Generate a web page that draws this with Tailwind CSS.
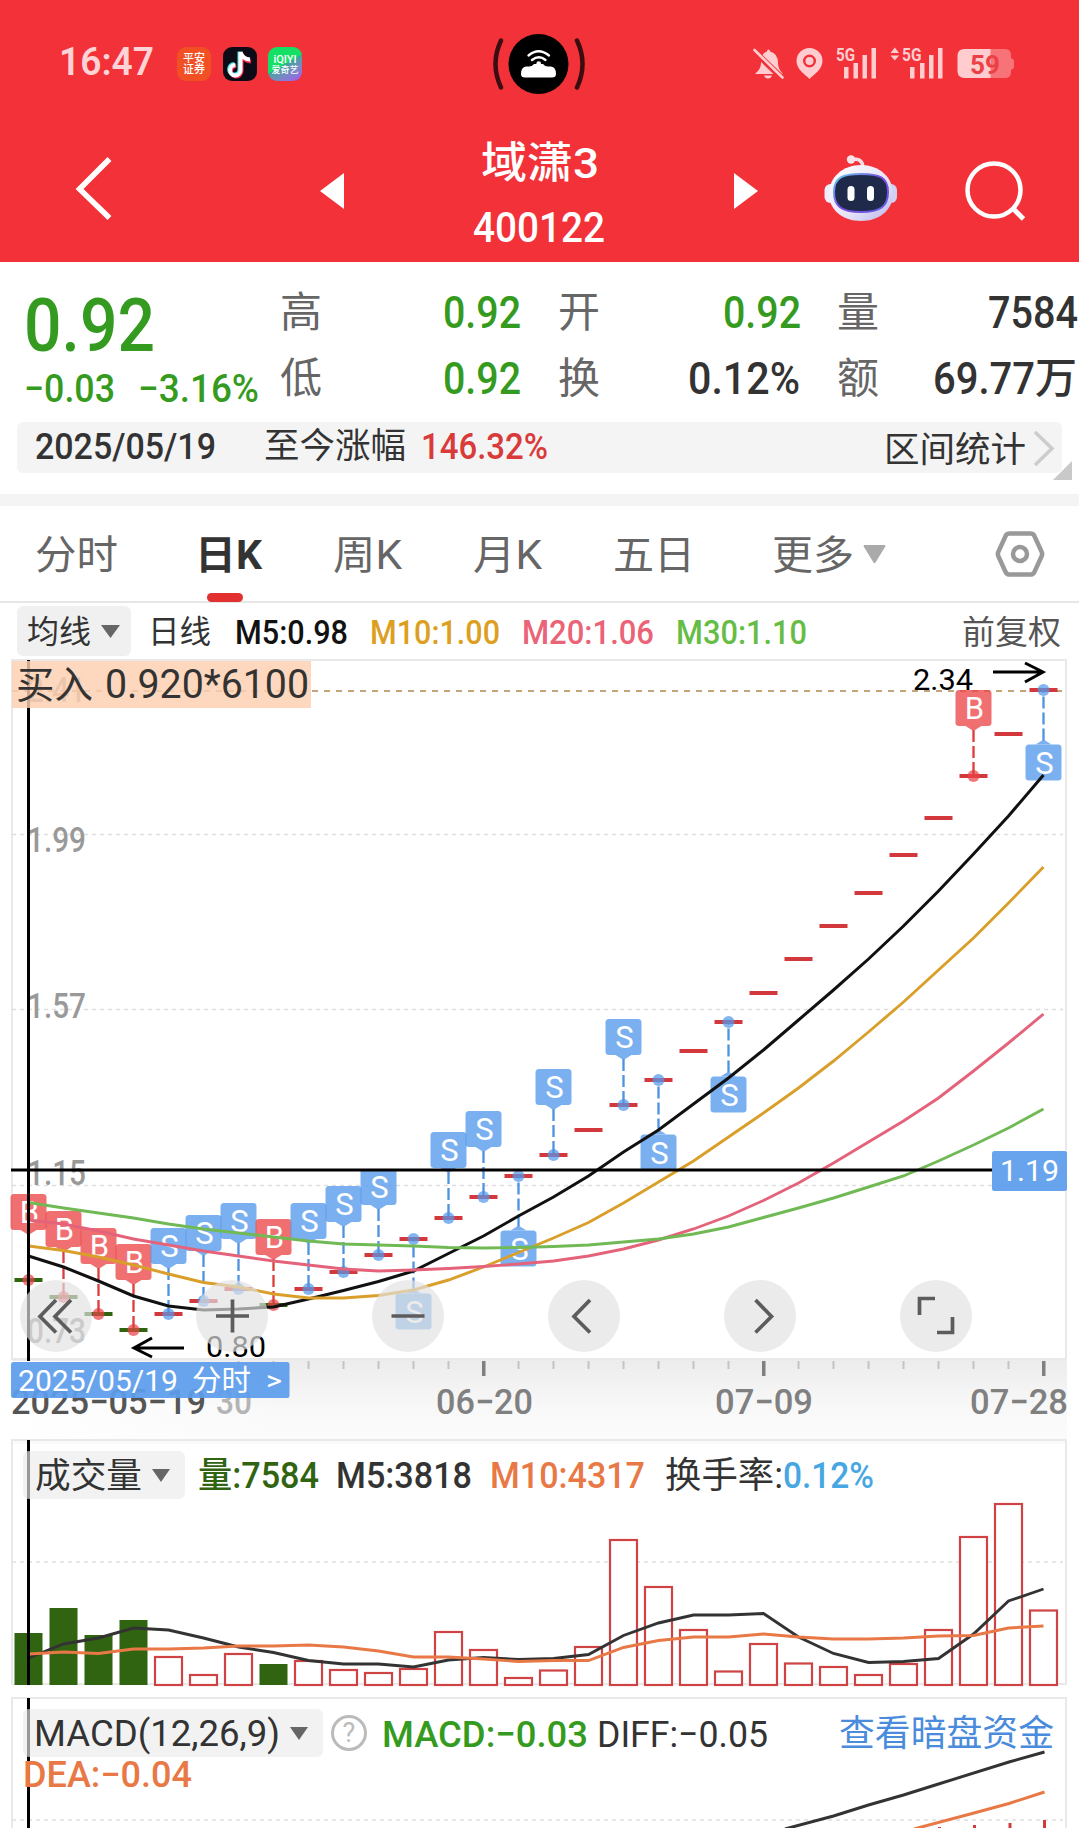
<!DOCTYPE html>
<html lang="zh-CN">
<head>
<meta charset="utf-8">
<title>域潇3 400122</title>
<script src="https://cdn.jsdelivr.net/npm/@tailwindcss/browser@4"></script>
</head>
<body class="bg-white">
<div class="w-[1079px] h-[1828px] overflow-hidden flex flex-col bg-white text-[#333] whitespace-nowrap font-['Roboto','Noto_Sans_CJK_SC',sans-serif]">

  <!-- Header -->
  <header class="h-[262px] shrink-0 bg-[#f23138] text-white">
    <div class="h-[128px] flex items-center">
      <span data-fit class="ml-[59px] w-[95px] text-[39px] leading-[40px] font-semibold text-[#ffd3d5] -mt-1">16:47</span>
      <div class="ml-[23px] size-[34px] rounded-[9px] bg-[#f15025] flex flex-col items-center justify-center text-[11px] leading-[11px] font-medium"><span>平安</span><span>证券</span></div>
      <svg class="ml-3 size-[34px]" viewBox="0 0 34 34"><rect width="34" height="34" rx="9" fill="#0c0b16"/><g fill="none" stroke-width="4"><path d="M17.500 5.500v18a5.200 5.200 0 1 1-5.200-5.500" stroke="#3be4e6" transform="translate(-1 -1)"/><path d="M17.500 5.500v18a5.200 5.200 0 1 1-5.200-5.500M17.500 6q2 7 9.500 7.500" stroke="#f5304f" transform="translate(1 1)"/><path d="M17.500 5v18.500a5.200 5.200 0 1 1-5.200-5.500M17.500 5q2 7 9.500 7.500" stroke="#fff"/></g></svg>
      <div class="ml-[11px] size-[34px] rounded-[9px] bg-linear-150 from-[#14e065] from-50% via-[#35a69a] to-[#a44cf5] flex flex-col items-center justify-center font-medium"><span class="text-[11px] leading-[11px]">iQIYI</span><span class="text-[9px] leading-[10px]">爱奇艺</span></div>
      <svg class="ml-[188px] w-[98px] h-[62px]" viewBox="490 33 98 62"><circle cx="538.500" cy="64" r="30"/><path d="M501 40.500q-11 23.500 0 47M577 40.500q11 23.500 0 47" fill="none" stroke="#3c0d10" stroke-width="4.500" stroke-linecap="round"/><path d="M521 74q0-7 5-7.500h3q3 0 5-2.500h9q2 2.500 5 2.500h3q5 .5 5 7.500 0 3.500-4 3.500h-27q-4 0-4-3.500z" fill="#fff"/><g fill="none" stroke="#fff" stroke-width="2.300" stroke-linecap="round"><path d="M528.500 55.500q10-8.500 20.500 0M532 60q7-5.500 13.500 0"/></g><circle cx="538.700" cy="63.500" r="2.300" fill="#fff"/></svg>
      <svg class="ml-[162px] w-[266px] h-[40px]" viewBox="750 44 266 40" fill="#ffcdd0">
        <path d="M755 74q6-5 6-11 0-10 6-11.500 0-2 1.500-2t1.500 2q8 2 8 11.500 0 6 5 11zM764 75.500h8q-1 3-4 3t-4-3z"/>
        <path d="M754 51l28 27" stroke="#f23138" stroke-width="6"/><path d="M754.500 50l28 27.500" stroke="#ffcdd0" stroke-width="2.600" stroke-linecap="round"/>
        <path fill-rule="evenodd" d="M809.500 48a13 13 0 0 1 13 13c0 8-8 13-13 18-5-5-13-10-13-18a13 13 0 0 1 13-13zm0 6.500a6.500 6.500 0 1 0 0 13 6.500 6.500 0 0 0 0-13z"/><circle cx="809.500" cy="61" r="4"/>
        <text x="836" y="61" font-size="18" font-weight="700" textLength="19" lengthAdjust="spacingAndGlyphs">5G</text>
        <text x="902" y="61" font-size="18" font-weight="700" textLength="19.500" lengthAdjust="spacingAndGlyphs">5G</text>
        <path d="M844 67h4.500v11.500h-4.500zM853.500 63h4.500v15.500h-4.500zM862.500 55h4.500v23.500h-4.500zM871.500 48h4.500v30.500h-4.500zM910 67h4.500v11.500h-4.500zM920 63h4.500v15.500h-4.500zM929 55h4.500v23.500h-4.500zM938 48h4.500v30.500h-4.500zM890.500 53l4.300-5.500 4.300 5.500zM890.500 55.500h8.600l-4.300 5z"/>
        <path d="M990 49h15q6 0 6 6v3l3 2v8l-3 2v2q0 6-6 6h-15z" fill="#f87377"/><path d="M990.500 49h-26q-7 0-7 7v15q0 7 7 7h26z"/>
        <text x="970" y="73.500" font-size="26" font-weight="700" fill="#ea4046" textLength="30" lengthAdjust="spacingAndGlyphs">59</text>
      </svg>
    </div>
    <div class="h-[122px] flex items-center">
      <svg class="ml-[74px] w-[40px] h-[68px]" viewBox="74 155 40 68"><path d="M109.500 159l-30 30 30 29" fill="none" stroke="#fff" stroke-width="5.500"/></svg>
      <svg class="ml-[206px] mt-1 w-[24px] h-[36px]" viewBox="0 0 24 36"><path d="M24 0v36L0 18z" fill="#fff"/></svg>
      <div class="ml-[129px] w-[132px] h-full pt-[11px] flex flex-col">
        <span data-fit class="ml-[8px] w-[118px] text-[43px] leading-[48px] font-medium">域潇3</span>
        <span data-fit class="mt-[17px] w-[132px] text-[42px] leading-[48px] font-medium">400122</span>
      </div>
      <svg class="ml-[129px] mt-1 w-[24px] h-[36px]" viewBox="0 0 24 36"><path d="M0 0v36l24-18z" fill="#fff"/></svg>
      <svg class="ml-[65px] w-[76px] h-[72px]" viewBox="823 153 76 72">
        <defs><linearGradient id="shell" x1="0" y1="0" x2="1" y2="1"><stop offset="0" stop-color="#fff"/><stop offset=".6" stop-color="#e6e3f8"/><stop offset="1" stop-color="#b9b3ea"/></linearGradient><linearGradient id="rim" x1="0" y1="0" x2="1" y2="1"><stop offset="0" stop-color="#67d3ee"/><stop offset=".5" stop-color="#7a48dc"/><stop offset="1" stop-color="#5e62e0"/></linearGradient></defs>
        <path d="M851 160q11-3 12 7" fill="none" stroke="#f7dfe8" stroke-width="3.500"/><circle cx="851" cy="159.500" r="4.200" fill="#fbe3ea"/>
        <rect x="824.500" y="184" width="14" height="19" rx="6" fill="#efedfb"/><rect x="883" y="184" width="14" height="19" rx="6" fill="#d3cff3"/>
        <path d="M861 165c18 0 32 12 32 29 0 16-14 27-32 27s-32-11-32-27c0-17 14-29 32-29z" fill="url(#shell)"/>
        <path d="M861 174c18 0 27 3 27 18 0 14-7 20-27 20s-27-6-27-20c0-15 9-18 27-18z" fill="#1f2a4b" stroke="url(#rim)" stroke-width="2"/>
        <rect x="847.500" y="186" width="7" height="15" rx="3.500" fill="#fff"/><rect x="867" y="186" width="7" height="15" rx="3.500" fill="#fff"/>
      </svg>
      <svg class="ml-[64px] w-[66px] h-[66px]" viewBox="963 156 66 66" fill="none" stroke="#fff"><circle cx="994" cy="190" r="26.500" stroke-width="4.500"/><path d="M1013 208.500l10.500 10.500" stroke-width="5"/></svg>
    </div>
  </header>

  <!-- Quote -->
  <section class="h-[160px] shrink-0 flex">
    <div class="w-[280px] pl-[24px] pt-[28px] text-[#349b20] font-medium">
      <span data-fit class="block w-[131px] text-[75px] leading-[70px]">0.92</span>
      <div class="mt-[9px] flex text-[39px] leading-[40px]">
        <span data-fit class="w-[91px]">−0.03</span><span data-fit class="ml-[23px] w-[121px]">−3.16%</span>
      </div>
    </div>
    <div class="pt-[18px] text-[45px] leading-[66px] font-medium">
      <div class="flex h-[66px]">
        <span class="w-[42px] text-[42px] font-normal text-[#666]">高</span><span data-fit class="ml-[121px] w-[78px] text-[#349b20]">0.92</span>
        <span class="ml-[37px] w-[42px] text-[42px] font-normal text-[#666]">开</span><span data-fit class="ml-[123px] w-[78px] text-[#349b20]">0.92</span>
        <span class="ml-[36px] w-[42px] text-[42px] font-normal text-[#666]">量</span><span data-fit class="ml-[109px] w-[90px]">7584</span>
      </div>
      <div class="flex h-[66px]">
        <span class="w-[42px] text-[42px] font-normal text-[#666]">低</span><span data-fit class="ml-[121px] w-[78px] text-[#349b20]">0.92</span>
        <span class="ml-[37px] w-[42px] text-[42px] font-normal text-[#666]">换</span><span data-fit class="ml-[88px] w-[112px]">0.12%</span>
        <span class="ml-[37px] w-[42px] text-[42px] font-normal text-[#666]">额</span><span data-fit class="ml-[54px] w-[102px]">69.77</span><span class="text-[42px]">万</span>
      </div>
    </div>
  </section>

  <!-- Range strip -->
  <section class="h-[72px] shrink-0 flex items-start relative">
    <div class="ml-[17px] w-[1045px] h-[51px] rounded-[6px] bg-[#f4f4f4] flex items-center text-[36px] leading-[50px]">
      <span data-fit class="ml-[18px] w-[181px] font-medium -mt-0.5">2025/05/19</span>
      <span data-fit class="ml-[48px] w-[142px] text-[35px] -mt-0.5">至今涨幅</span>
      <span data-fit class="ml-[15px] w-[127px] font-medium text-[#d93a3a] -mt-0.5">146.32%</span>
      <span data-fit class="ml-[336px] w-[142px] text-[35px] mt-1.5">区间统计</span>
      <svg class="ml-[7px] w-[24px] h-[40px]" viewBox="0 0 24 40"><path d="M2 4l17 16.500L2 37" fill="none" stroke="#ccc" stroke-width="3.500"/></svg>
    </div>
    <svg class="absolute left-[1053px] top-[39px] w-[19px] h-[19px]" viewBox="0 0 19 19"><path d="M19 0v19H0z" fill="#c9c9c9"/></svg>
  </section>
  <div class="h-[12px] shrink-0 bg-[#f4f4f4]"></div>

  <!-- Period tabs -->
  <nav class="h-[97px] shrink-0 border-b-2 border-[#e6e6e6] flex text-[40px] leading-[100px] text-[#666]">
    <span data-fit class="ml-[35px] w-[83px]">分时</span>
    <div class="ml-[77px] w-[67px] relative"><span data-fit class="block w-[67px] font-bold text-[#333]">日K</span><i class="absolute left-[12px] bottom-[-1px] w-[36px] h-[9px] rounded-full bg-[#e23030]"></i></div>
    <span data-fit class="ml-[71px] w-[69px]">周K</span>
    <span data-fit class="ml-[71px] w-[69px]">月K</span>
    <span data-fit class="ml-[71px] w-[82px]">五日</span>
    <span data-fit class="ml-[77px] w-[82px]">更多</span>
    <svg class="ml-[9px] mt-[39px] w-[23px] h-[19px]" viewBox="0 0 23 19"><path d="M1 0h21q1 1 0 2L12.500 17.500q-1 1.500-2 0L1 2Q0 1 1 0z" fill="#aaa"/></svg>
    <svg class="ml-[109px] mt-[23px] w-[50px] h-[50px]" viewBox="995 529 50 50" fill="none" stroke="#999" stroke-width="4.500"><path d="M1009.500 533.500h21q2.500 0 3.700 2l7.300 16q1.300 2.500 0 5l-7.300 16q-1.200 2-3.700 2h-21q-2.500 0-3.700-2l-7.300-16q-1.300-2.500 0-5l7.300-16q1.200-2 3.700-2z"/><circle cx="1020" cy="554" r="7"/></svg>
  </nav>

  <!-- Moving-average legend -->
  <section class="h-[55px] shrink-0 pt-[3px] flex text-[33px] leading-[53px] font-medium">
    <div class="ml-[17px] w-[114px] h-[50px] rounded-[6px] bg-[#f0f0f0] flex font-normal">
      <span data-fit class="ml-[10px] w-[64px] text-[32px]">均线</span>
      <svg class="ml-[10px] mt-[19px] w-[19px] h-[13px]" viewBox="0 0 19 13"><path d="M0 0h19L9.500 13z" fill="#666"/></svg>
    </div>
    <span data-fit class="ml-[17px] w-[63px] text-[32px] font-normal">日线</span>
    <span data-fit class="ml-[24px] w-[113px] text-[#111]">M5:0.98</span>
    <span data-fit class="ml-[22px] w-[130px] text-[#dc9f22]">M10:1.00</span>
    <span data-fit class="ml-[22px] w-[132px] text-[#ea6377]">M20:1.06</span>
    <span data-fit class="ml-[22px] w-[131px] text-[#66bd45]">M30:1.10</span>
    <span data-fit class="ml-[155px] w-[99px] text-[33px] font-normal text-[#555]">前复权</span>
  </section>

  <!-- Price chart, drawn in page coordinates -->
  <svg id="price" class="w-[1079px] h-[781px] shrink-0" viewBox="0 658 1079 781"></svg>

  <!-- Volume -->
  <section class="h-[258px] shrink-0 relative">
    <svg id="volume" class="absolute inset-0 w-[1079px] h-[258px]" viewBox="0 1439 1079 258"></svg>
    <div class="relative pt-[12px] flex text-[36px] leading-[51px] font-medium">
      <div class="ml-[23px] w-[162px] h-[48px] rounded-[6px] bg-[#ebebeb]/65 flex">
        <span data-fit class="ml-[12px] w-[107px] text-[35px] font-normal">成交量</span>
        <svg class="ml-[10px] mt-[18px] w-[18px] h-[13px]" viewBox="0 0 18 13"><path d="M0 0h18L9 13z" fill="#666"/></svg>
      </div>
      <span data-fit class="ml-[13px] w-[121px] text-[#316411]">量:7584</span>
      <span data-fit class="ml-[17px] w-[136px]">M5:3818</span>
      <span data-fit class="ml-[18px] w-[155px] text-[#e87845]">M10:4317</span>
      <span data-fit class="ml-[20px] w-[118px] font-normal">换手率:</span>
      <span data-fit class="w-[91px] text-[#47a7e2]">0.12%</span>
    </div>
  </section>

  <!-- MACD -->
  <section class="h-[131px] shrink-0 relative">
    <svg id="macd" class="absolute inset-0 w-[1079px] h-[131px]" viewBox="0 1697 1079 131"></svg>
    <div class="relative pt-[12px] flex text-[37px] leading-[51px]">
      <div class="ml-[23px] w-[300px] h-[48px] rounded-[6px] bg-[#ebebeb]/65 flex">
        <span data-fit class="ml-[11px] w-[246px] text-[36px]">MACD(12,26,9)</span>
        <svg class="ml-[10px] mt-[18px] w-[18px] h-[13px]" viewBox="0 0 18 13"><path d="M0 0h18L9 13z" fill="#666"/></svg>
      </div>
      <div class="ml-[8px] mt-[6px] size-[36px] rounded-full border-[3px] border-[#bbb] text-[#bbb] text-[27px] leading-[31px] text-center">?</div>
      <span data-fit class="ml-[15px] w-[206px] text-[#349b20] font-medium">MACD:−0.03</span>
      <span data-fit class="ml-[9px] w-[171px]">DIFF:−0.05</span>
      <span data-fit class="ml-[71px] w-[215px] text-[36px] text-[#4a8bdc]">查看暗盘资金</span>
    </div>
    <div class="relative pl-[23px] -mt-[10px] text-[36px] leading-[50px] text-[#e87845] font-medium"><span data-fit class="block w-[169px]">DEA:−0.04</span></div>
  </section>
</div>

<script>
function fit(el) {
  el.style.transformOrigin = '0 50%';
  el.style.transform = 'none';
  const r = document.createRange(); r.selectNodeContents(el);
  const w = r.getBoundingClientRect().width;
  if (w) el.style.transform = 'scaleX(' + el.offsetWidth / w + ')';
}
const labels = [...document.querySelectorAll('[data-fit]')];
const fitAll = () => labels.forEach(fit);
const watcher = new ResizeObserver(fitAll);
labels.forEach(el => watcher.observe(el));
fitAll();
addEventListener('load', fitAll);

const X = i => 28.500 + 35 * i;
const line = (ys, c, w = 2.900) => `<polyline fill="none" stroke="${c}" stroke-width="${w}" points="${ys.map((y, i) => X(i) + ',' + y).join(' ')}"/>`;
const txt = (s, x, y, size, w, c, extra = '') => `<text x="${x}" y="${y}" font-size="${size}" fill="${c}" textLength="${w}" lengthAdjust="spacingAndGlyphs" ${extra}>${s}</text>`;
const hline = (y, c, dash, w) => `<path d="M12 ${y}H1063" stroke="${c}" stroke-width="${w}" stroke-dasharray="${dash}"/>`;

// ---- price ----
const close = [1280,1297,1314,1330,1314,1301,1289,1305,1289,1272,1255,1239,1218,1197,1176,1155,1130,1105,1080,1051,1022,993,959,926,893,855,818,776,734,690];
const down = [0,1,2,3,7];
const marks = {0:'B',1:'B',2:'B',3:'B',4:'S',5:'S',6:'S',7:'B',8:'S',9:'S',10:'S',11:'s',12:'S',13:'S',14:'s',15:'S',17:'S',18:'s',20:'s',27:'B',29:'s'};
let h = '';
h += `<defs><linearGradient id="ax" x1="0" y1="0" x2="0" y2="1"><stop offset="0" stop-color="#ececec"/><stop offset=".6" stop-color="#f8f8f8"/><stop offset="1" stop-color="#fbfbfb"/></linearGradient><linearGradient id="fade"><stop offset="0" stop-color="#fff"/><stop offset="1" stop-color="#fff" stop-opacity="0"/></linearGradient></defs>`;
h += `<rect x="12" y="1359" width="1055" height="80" fill="url(#ax)"/><rect x="10" y="1361" width="280" height="80" fill="url(#fade)"/>`;
h += `<path d="M12 1359V660H1066V1359z" fill="#fff" stroke="#e9e9e9" stroke-width="2"/>`;
[834.500, 1009.500, 1185.500].forEach(y => h += hline(y, '#dedede', '4 4', 1.500));
h += hline(691, '#c2a679', '6 6', 2);
[['2.41',702],['1.99',852],['1.57',1018],['1.15',1185],['0.73',1343]].forEach(([s, y]) => h += txt(s, 27, y, 35.500, 59, '#999', 'font-weight="500"'));
close.forEach((y, i) => h += `<rect x="${X(i) - 14}" y="${y - 2}" width="28" height="4" fill="${down.includes(i) ? '#316411' : '#d2383c'}"/>`);
for (const k in marks) {
  const i = +k, m = marks[k], y = close[i], x = X(i), below = m === 's', B = m === 'B';
  const c = B ? '#ec4446' : '#5398ec', d = B ? '#dc3c3c' : '#4e92e0';
  const top = below ? y + 54.500 : y - 86;
  const tip = below ? `M${x - 8} ${top}l8-5 8 5z` : `M${x - 8} ${top + 36}l8 5 8-5z`;
  h += `<circle cx="${x}" cy="${y}" r="6" fill="${c}" opacity=".72"/>`;
  h += `<path d="M${x} ${below ? top - 4 : top + 40}V${y}" stroke="${d}" stroke-width="2.300" stroke-dasharray="12 4"/>`;
  h += `<g fill="${c}" opacity=".76"><rect x="${x - 18}" y="${top}" width="36" height="36" rx="3.500"/><path d="${tip}"/></g>`;
  h += `<text x="${x + 1}" y="${top + 29}" font-size="31" text-anchor="middle" fill="#fff">${m.toUpperCase()}</text>`;
}
h += line([1256,1267,1281,1296,1306,1310,1309,1307,1299,1290.500,1281.500,1271,1253.500,1236,1216,1197,1176,1152,1130,1104,1078,1050,1020,990,959,926,891,854,816,775], '#111', 3);
h += line([1246,1250.500,1257,1265,1274,1282.500,1287,1294,1298,1298,1295.500,1290,1280,1267,1252.500,1238,1222.500,1203,1182,1161,1137,1113,1088,1061,1032,1002,970,938,903,867], '#d99f2a');
h += line([1220,1224,1231,1239,1245,1251,1256,1261,1265,1269,1271,1270,1268.500,1266.500,1264,1261,1256,1249,1240,1229,1216,1200.500,1183,1163,1142,1121,1098,1071,1043,1014], '#e4637a');
h += line([1202.500,1208,1213,1218,1224,1229,1233,1237,1241,1244,1245,1246,1247.500,1248,1247.500,1246.500,1245,1242,1239,1234,1227,1217.500,1208,1198,1187,1176,1161,1145,1128,1109], '#70b955');
h += txt('2.34', 913, 690, 30, 60, '#000') + txt('0.80', 206, 1357, 30, 60, '#000');
h += `<path d="M993 672H1042M1025 663l18 9-18 10M184 1348H135M152 1338l-18 10 18 9" fill="none" stroke="#000" stroke-width="3"/>`;
// axis
for (let i = 6; i < 30; i++) {
  const big = [13, 21, 29].includes(i);
  h += `<rect x="${X(i) - (big ? 1.500 : 1)}" y="1361" width="${big ? 3.500 : 2}" height="${big ? 15 : 8}" fill="${big ? '#808080' : '#c4c4c4'}"/>`;
}
const med = 'font-weight="500"';
h += txt('06−20', 436, 1414, 35.500, 97, '#808080', med) + txt('07−09', 715, 1414, 35.500, 98, '#808080', med) + txt('07−28', 970, 1414, 35.500, 98, '#808080', med);
h += txt('30', 216, 1414, 35.500, 36, '#b4b4b4', med) + txt('2025−05−19', 11, 1414, 35.500, 195, '#555', med);
// crosshair
h += `<path d="M28.500 660V1361" stroke="#000" stroke-width="3"/><path d="M11 1170H992" stroke="#000" stroke-width="3"/>`;
h += `<rect x="992" y="1151" width="75" height="40" rx="2.500" fill="#5d9dec" opacity=".93"/>` + txt('1.19', 1000, 1181, 30, 59, '#fff');
h += `<rect x="11" y="1362" width="278.500" height="36" rx="2.500" fill="#5d9dec" opacity=".93"/>` + txt('2025/05/19', 18, 1391, 30, 160, '#fff') + txt('分时', 192, 1391, 29, 59, '#fff') + txt('&gt;', 266, 1390, 28, 16, '#fff');
h += `<rect x="12" y="661" width="299" height="47" fill="#fcd0b0" opacity=".82"/>` + txt('买入', 16, 698, 38, 77, '#333') + txt('0.920*6100', 105, 698, 40, 204, '#333');
// chart controls
const icons = [
  'M56 1300l-16 16.500 16 16M71 1300l-16 16.500 16 16', 'M216 1316h33M232.500 1299.500v33', 'M391.500 1316h33',
  'M590 1300l-16 16.500 16 16', 'M755.500 1300l16 16.500-16 16', 'M919.500 1315v-16.500h15.500M937 1332.500h15.500v-15.500'];
icons.forEach((d, i) => h += `<circle cx="${56 + 176 * i}" cy="1316" r="36" fill="#e2e2e2" opacity=".68"/><path d="${d}" fill="none" stroke="#5c5c5c" stroke-width="3.700"/>`);
document.getElementById('price').innerHTML = h;

// ---- volume ----
const vol = [1633,1608,1635,1620,1656,1674,1653,1664,1660,1669,1672,1668,1631,1649,1677,1669.500,1646,1539,1586,1629,1670.500,1643,1662.500,1666,1674,1663,1629,1536,1503,1609.500];
let v = `<rect x="12" y="1439" width="1055" height="5" fill="#fafafa"/><path d="M12 1684V1440H1066V1684z" fill="none" stroke="#e9e9e9" stroke-width="2"/>` + hline(1562, '#e6e6e6', '4 4', 1.800);
vol.forEach((y, i) => v += down.includes(i)
  ? `<rect x="${X(i) - 14}" y="${y}" width="28" height="${1685 - y}" fill="#316411"/>`
  : `<rect x="${X(i) - 13.500}" y="${y + 1}" width="27" height="${1684 - y}" fill="#fff" stroke="#cf4345" stroke-width="2.200"/>`);
v += line([1658,1644,1638,1628,1630,1638,1647,1652.500,1660.500,1664,1664,1667,1660,1657.500,1659.500,1658.500,1654.500,1635.500,1623,1615,1615,1613.500,1637,1653.500,1662.500,1661.500,1658.500,1634,1601,1589], '#333');
v += line([1654,1652,1653.500,1649,1649,1648,1646,1646,1645,1647,1651,1657,1657,1659,1661.500,1660.500,1660.500,1647.500,1640.500,1637,1637,1634,1637,1639,1639,1638,1636,1635.500,1628,1626], '#e87845');
v += `<path d="M28.500 1440V1685" stroke="#000" stroke-width="3"/>`;
document.getElementById('volume').innerHTML = v;

// ---- MACD ----
document.getElementById('macd').innerHTML =
  `<path d="M12 1840V1698H1066V1840" fill="none" stroke="#e9e9e9" stroke-width="2"/>` + hline(1820, '#e6e6e6', '4 4', 1.800) +
  `<path d="M28.500 1698V1828" stroke="#000" stroke-width="3"/><path d="M1044.500 1820v10M1010 1823v6M974.500 1825v5M939.500 1827v3" stroke="#cf3a3c" stroke-width="3"/>` +
  `<polyline points="785,1829 833.500,1816 868.500,1805 903.500,1795 938.500,1784 1009,1762 1044.500,1752" fill="none" stroke="#333" stroke-width="2.900"/>` +
  `<polyline points="914,1829 974,1813 1009,1803.500 1044.500,1792" fill="none" stroke="#e87845" stroke-width="2.900"/>`;
</script>
</body>
</html>
